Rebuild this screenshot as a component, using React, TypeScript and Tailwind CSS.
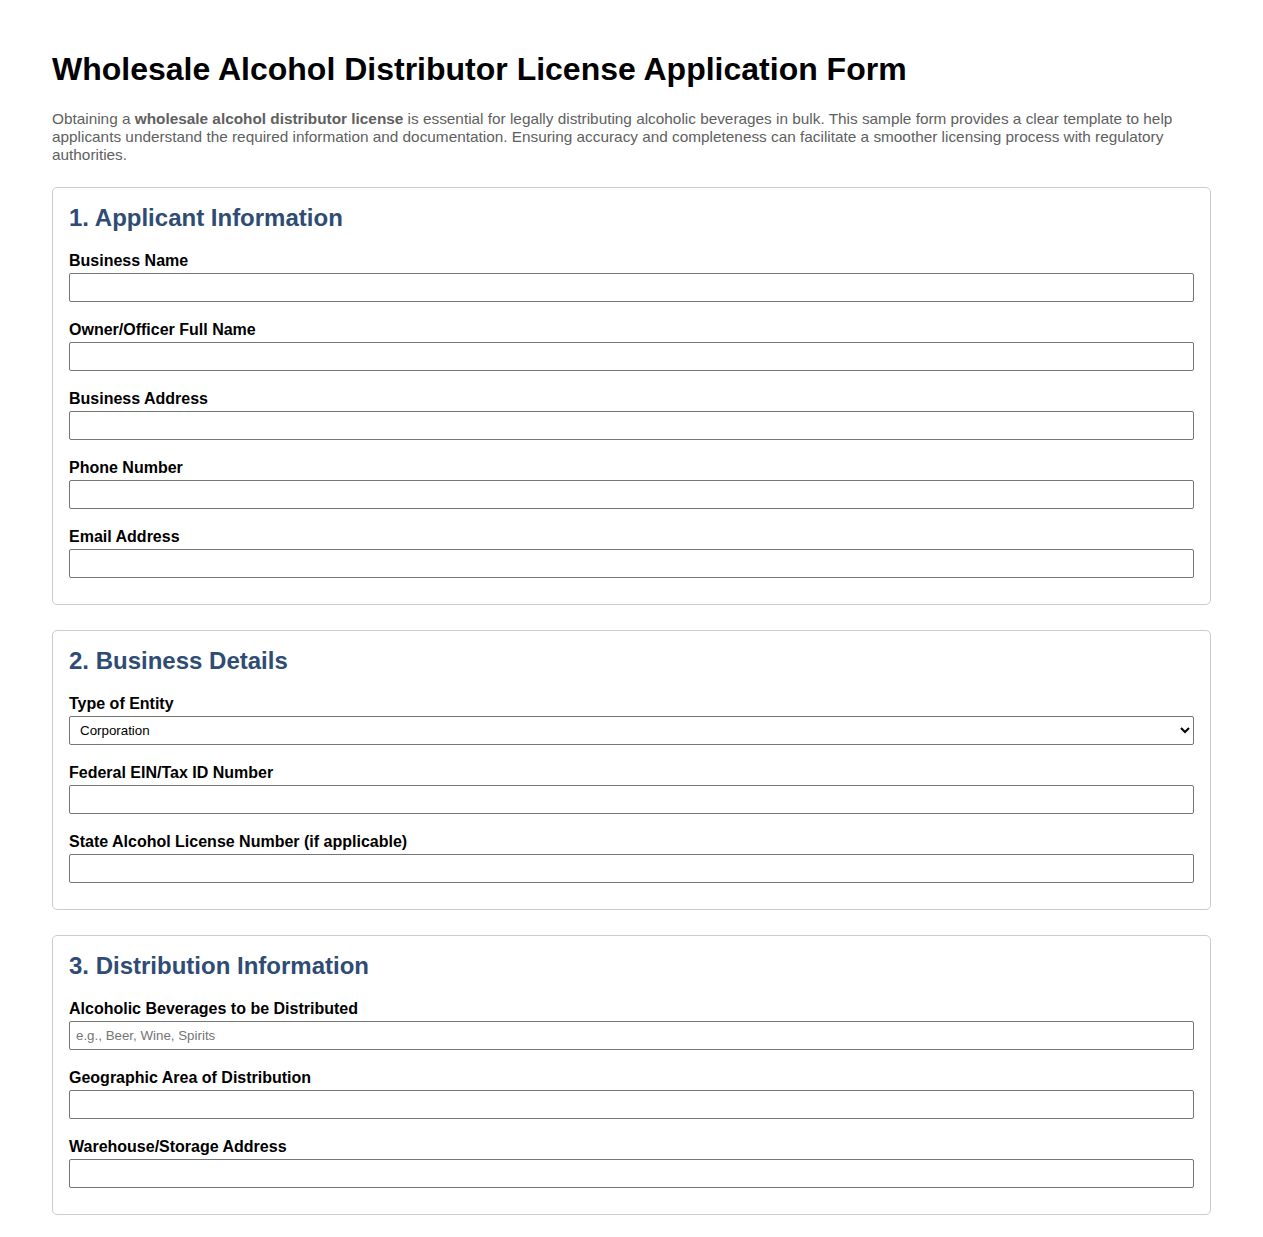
import React from 'react';

type Field = {
  label: string;
  kind?: 'input' | 'select';
  placeholder?: string;
  options?: string[];
};

type Section = {
  title: string;
  fields: Field[];
};

const sections: Section[] = [
  {
    title: '1. Applicant Information',
    fields: [
      { label: 'Business Name' },
      { label: 'Owner/Officer Full Name' },
      { label: 'Business Address' },
      { label: 'Phone Number' },
      { label: 'Email Address' },
    ],
  },
  {
    title: '2. Business Details',
    fields: [
      {
        label: 'Type of Entity',
        kind: 'select',
        options: ['Corporation', 'LLC', 'Partnership', 'Sole Proprietorship'],
      },
      { label: 'Federal EIN/Tax ID Number' },
      { label: 'State Alcohol License Number (if applicable)' },
    ],
  },
  {
    title: '3. Distribution Information',
    fields: [
      { label: 'Alcoholic Beverages to be Distributed', placeholder: 'e.g., Beer, Wine, Spirits' },
      { label: 'Geographic Area of Distribution' },
      { label: 'Warehouse/Storage Address' },
    ],
  },
];

const FormField = ({ field }: { field: Field }) => (
  <div className="flex flex-col">
    <label className="block text-[16px] leading-[18px] font-bold text-black mb-[3px]">{field.label}</label>
    {field.kind === 'select' ? (
      <select
        defaultValue={field.options?.[0]}
        className="h-[29px] w-full border border-[#767676] rounded-[2px] bg-white pl-[6px] pr-[2px] text-[13.33px] text-black"
      >
        {field.options?.map((opt) => (
          <option key={opt}>{opt}</option>
        ))}
      </select>
    ) : (
      <input
        type="text"
        placeholder={field.placeholder}
        className="h-[29px] w-full border border-[#767676] rounded-[2px] bg-white px-[6px] text-[13.33px] text-black placeholder:text-[#757575]"
      />
    )}
  </div>
);

export default function App() {
  return (
    <main
      className="min-h-screen bg-white px-[52px] pt-[51px] pb-[22px]"
      style={{ fontFamily: '"Liberation Sans", Arial, sans-serif' }}
    >
      <h1 className="text-[32px] leading-[37px] font-bold text-black">
        Wholesale Alcohol Distributor License Application Form
      </h1>
      <p className="mt-[22px] text-[15.35px] leading-[18px] text-[#606060]">
        Obtaining a <strong className="font-bold">wholesale alcohol distributor license</strong> is essential for
        legally distributing alcoholic beverages in bulk. This sample form provides a clear template to help
        applicants understand the required information and documentation. Ensuring accuracy and completeness can
        facilitate a smoother licensing process with regulatory authorities.
      </p>

      <div className="mt-[23px] flex flex-col gap-[25px]">
        {sections.map((section) => (
          <section
            key={section.title}
            className="border border-[#cccccc] rounded-[5px] px-[16px] pt-[16px] pb-[26px]"
          >
            <h2 className="text-[24px] leading-[28px] font-bold text-[#2e4c74] mb-[20px]">{section.title}</h2>
            <div className="flex flex-col gap-[19px]">
              {section.fields.map((field) => (
                <FormField key={field.label} field={field} />
              ))}
            </div>
          </section>
        ))}
      </div>
    </main>
  );
}
